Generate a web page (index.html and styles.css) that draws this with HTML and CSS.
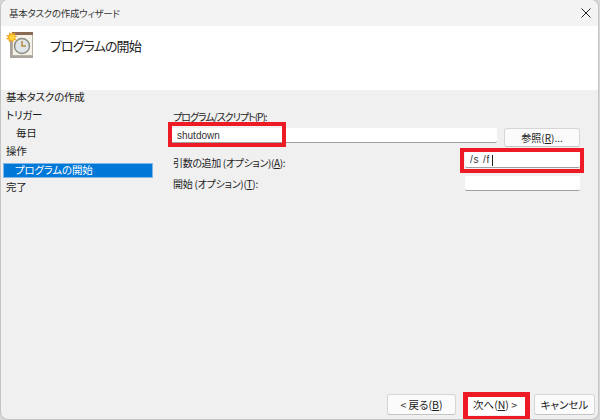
FILE: index.html
```html
<!DOCTYPE html>
<html lang="ja">
<head>
<meta charset="utf-8">
<title>基本タスクの作成ウィザード</title>
<link rel="stylesheet" href="styles.css">
</head>
<body>
<div class="window">
  <div class="titlebar">
    <span class="title">基本タスクの作成ウィザード</span>
    <svg class="close" width="10" height="10" viewBox="0 0 10 10"><path d="M.5.5l9 9M9.5.5l-9 9" stroke="#222" stroke-width="1" fill="none"/></svg>
  </div>
  <div class="header">
    <svg class="task-icon" width="30" height="30" viewBox="0 0 30 30">
      <rect x="5" y="6" width="23" height="23" fill="#a8a49c"/>
      <rect x="7.500" y="3.500" width="20" height="23" fill="#f4f1e8" stroke="#b8b2a4"/>
      <rect x="7" y="3" width="21" height="3" fill="#8b6a55"/>
      <circle cx="17" cy="17" r="7.500" fill="#dfe6ea" stroke="#8c8c80" stroke-width="1.500"/>
      <path d="M17 12v5h4" stroke="#b98a3c" stroke-width="1.500" fill="none"/>
      <g transform="translate(-2.500 1)">
        <path d="M9.500 1l1 3 2.500-1.500-1 3 3 .8-2.600 1.500 1.700 2.600-3-.5-.6 3-1.900-2.400-2.400 1.900.2-3-3-.1 2.200-2.100-2.100-2.100 3 .1.200-3 2.300 1.900z" fill="#f7a71c"/>
        <circle cx="9.500" cy="7.500" r="2.800" fill="#ffd23c"/>
      </g>
    </svg>
    <h1 class="heading">プログラムの開始</h1>
  </div>
  <div class="body">
    <nav class="steps">
      <div class="step">基本タスクの作成</div>
      <div class="step">トリガー</div>
      <div class="step sub">毎日</div>
      <div class="step">操作</div>
      <div class="step sub selected">プログラムの開始</div>
      <div class="step">完了</div>
    </nav>
    <main class="content">
      <div class="form">
        <label class="label label-top">プログラム/スクリプト(<u>P</u>):</label>
        <div class="row">
          <div class="field field-wide">
            <input class="input input-program" type="text" value="shutdown">
            <span class="mark mark-program"></span>
          </div>
          <button class="btn browse" type="button">参照(<u>R</u>)...</button>
        </div>
        <div class="row row-args">
          <label class="label label-args">引数の追加 (オプション)(<u>A</u>):</label>
          <div class="field field-short">
            <input class="input input-args" type="text" value="/s /f">
            <span class="caret"></span>
            <span class="mark mark-args"></span>
          </div>
        </div>
        <div class="row row-start">
          <label class="label label-start">開始 (オプション)(<u>T</u>):</label>
          <div class="field field-short">
            <input class="input" type="text">
          </div>
        </div>
      </div>
      <div class="actions">
        <button class="btn btn-back" type="button">&lt; 戻る(<u>B</u>)</button>
        <div class="next-wrap">
          <button class="btn btn-next" type="button">次へ(<u>N</u>) &gt;</button>
          <span class="mark mark-next"></span>
        </div>
        <button class="btn btn-cancel" type="button">キャンセル</button>
      </div>
    </main>
  </div>
</div>
</body>
</html>
```

FILE: styles.css
```css
* { box-sizing: border-box; }
html, body { margin: 0; height: 100%; background: #d8d8d8; }
body {
  width: 600px;
  height: 420px;
  overflow: hidden;
  padding: 0 2px 0 1px;
  font-family: "Noto Sans CJK JP", "Noto Sans", sans-serif;
  font-feature-settings: "palt";
  font-size: 10.500px;
  color: #1c1c1c;
}
.window {
  height: 419px;
  display: flex;
  flex-direction: column;
  background: #f0f0f0;
  border-radius: 7px;
  box-shadow: 0 0 0 1px #c4c4c4;
  overflow: hidden;
}
.titlebar {
  height: 26px;
  flex: none;
  display: flex;
  align-items: center;
  justify-content: space-between;
  padding: 0 7px 0 8px;
  background: #f3f3f3;
}
.title { font-size: 9.500px; letter-spacing: -0.3px; color: #333; line-height: 26px; }
.header {
  height: 64px;
  flex: none;
  background: #fff;
  display: flex;
  align-items: flex-start;
  padding: 3px 0 0 4px;
}
.task-icon { flex: none; }
.heading {
  margin: 5px 0 0 15px;
  font-size: 13px;
  letter-spacing: -0.9px;
  font-weight: 400;
  line-height: 24px;
  color: #222;
}
.body { flex: 1; display: flex; min-height: 0; }
.steps { width: 160px; flex: none; margin-left: 2px; letter-spacing: -0.2px; }
.step { height: 18px; line-height: 14px; padding-left: 3px; }
.step.sub { padding-left: 13px; }
.step.selected {
  margin-right: 10px;
  background: #0078d7;
  color: #fff;
  border: 1px solid #7fb8e8;
  line-height: 12px;
  height: 15px;
  margin-top: 1px;
  margin-bottom: 2px;
  padding-left: 11px;
}
.content {
  flex: 1;
  min-width: 0;
  display: flex;
  flex-direction: column;
  justify-content: space-between;
  padding: 20px 3px 4px 7px;
}
.form { display: flex; flex-direction: column; padding-right: 15px; }
.label { font-size: 10px; line-height: 14px; color: #222; white-space: nowrap; padding-left: 3px; }
.label-top { display: block; height: 18px; letter-spacing: -1px; }
.row { display: flex; align-items: flex-start; justify-content: space-between; }
.row-args { margin-top: 5px; height: 16px; }
.row-start { margin-top: 8px; height: 15px; }
.label-args { margin-top: 4px; letter-spacing: -0.35px; }
.label-start { margin-top: 1px; letter-spacing: -0.25px; }
.field { position: relative; }
.field-wide { width: 327px; height: 15px; }
.field-short { width: 115px; height: 100%; }
.input {
  display: block;
  width: 100%;
  height: 100%;
  border: 0;
  border-bottom: 1px solid #a0a0a0;
  border-radius: 2px;
  background: #fff;
  padding: 0 5px;
  margin: 0;
  font: 10px "Liberation Sans", sans-serif;
  color: #333;
  outline: none;
}
.input-program { padding-left: 7px; }
.input-args { letter-spacing: 0.8px; }
.caret {
  position: absolute;
  left: 27px;
  top: 3px;
  width: 1px;
  height: 11px;
  background: #222;
}
.mark { position: absolute; border: 4px solid #ed1c24; pointer-events: none; }
.mark-program { left: -2px; top: -6px; width: 118px; height: 25px; }
.mark-args { left: -5px; top: -4px; width: 124px; height: 25px; }
.mark-next { left: -1px; top: -2px; width: 67px; height: 29px; border-width: 5px; }
.btn {
  display: block;
  height: 21px;
  padding: 0;
  border: 1px solid #d6d6d6;
  border-bottom-color: #c4c4c4;
  border-radius: 3px;
  background: #fbfbfb;
  font: inherit;
  color: #222;
  white-space: nowrap;
}
.browse { width: 76px; height: 19px; font-size: 10px; }
.actions { display: flex; justify-content: flex-end; gap: 8px; }
.btn-back { width: 69px; }
.next-wrap { position: relative; width: 62px; }
.btn-next { width: 100%; border-color: transparent; background: #fff; }
.btn-cancel { width: 61px; }
u { text-underline-offset: 1px; }
```
